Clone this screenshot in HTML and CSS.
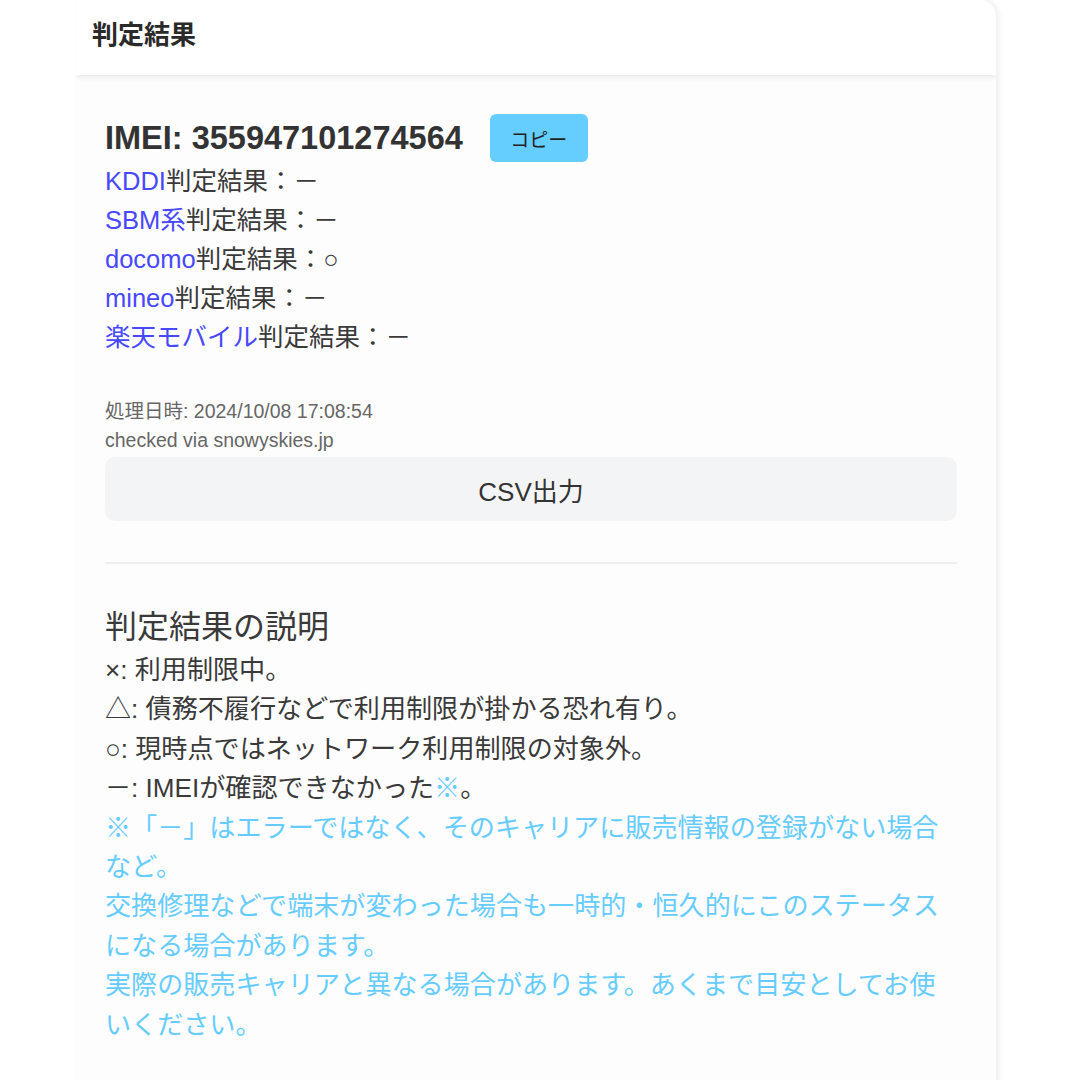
FILE: index.html
```html
<!DOCTYPE html>
<html lang="ja">
<head>
<meta charset="utf-8">
<title>判定結果</title>
<link rel="stylesheet" href="styles.css">
</head>
<body>
<div class="page">
  <section class="card">
    <header class="card-header">
      <h2 class="card-title">判定結果</h2>
    </header>
    <div class="card-body">
      <div class="imei-row">
        <h1 class="imei">IMEI: 355947101274564</h1>
        <button class="copy-btn" type="button">コピー</button>
      </div>
      <ul class="results">
        <li><a class="carrier" href="#">KDDI</a>判定結果：－</li>
        <li><a class="carrier" href="#">SBM系</a>判定結果：－</li>
        <li><a class="carrier" href="#">docomo</a>判定結果：○</li>
        <li><a class="carrier" href="#">mineo</a>判定結果：－</li>
        <li><a class="carrier" href="#">楽天モバイル</a>判定結果：－</li>
      </ul>
      <div class="meta">
        <div>処理日時: 2024/10/08 17:08:54</div>
        <div>checked via snowyskies.jp</div>
      </div>
      <button class="csv-btn" type="button">CSV出力</button>
      <hr class="divider">
      <h3 class="legend-title">判定結果の説明</h3>
      <div class="legend">
        <div>×: 利用制限中。</div>
        <div>△: 債務不履行などで利用制限が掛かる恐れ有り。</div>
        <div>○: 現時点ではネットワーク利用制限の対象外。</div>
        <div>－: IMEIが確認できなかった<span class="note-mark">※</span>。</div>
        <div class="note">※「－」はエラーではなく、そのキャリアに販売情報の登録がない場合など。</div>
        <div class="note">交換修理などで端末が変わった場合も一時的・恒久的にこのステータスになる場合があります。</div>
        <div class="note">実際の販売キャリアと異なる場合があります。あくまで目安としてお使いください。</div>
      </div>
    </div>
  </section>
</div>
</body>
</html>
```
FILE: styles.css
```css
* {
  box-sizing: border-box;
}

html, body {
  margin: 0;
  padding: 0;
  background: #ffffff;
}

body {
  font-family: "Liberation Sans", "Noto Sans CJK JP", sans-serif;
  color: #3a3a3a;
  overflow: hidden;
}

.page {
  padding-left: 76px;
  width: 1080px;
}

.card {
  width: 920px;
  min-height: 1100px;
  background: #fdfdfd;
  border-radius: 0 16px 0 0;
  box-shadow: 3px 0 6px rgba(0, 0, 0, 0.07);
  overflow: hidden;
}

.card-header {
  height: 75px;
  display: flex;
  align-items: center;
  padding: 0 16px 5px;
  background: #ffffff;
  box-shadow: 0 3px 5px rgba(0, 0, 0, 0.07);
  position: relative;
}

.card-title {
  margin: 0;
  font-size: 26px;
  font-weight: 700;
  color: #2a2a2a;
  line-height: 1;
}

.card-body {
  padding: 39px 39px 40px 29px;
}

.imei-row {
  display: flex;
  align-items: center;
  height: 48px;
}

.imei {
  margin: 0;
  font-size: 32.5px;
  font-weight: 700;
  color: #333333;
  line-height: 1;
}

.copy-btn {
  margin-left: 27px;
  width: 98px;
  height: 48px;
  border: none;
  border-radius: 6px;
  background: #66cdff;
  color: #222222;
  font-family: inherit;
  font-size: 19px;
  padding: 0;
}

.results {
  list-style: none;
  margin: 0;
  padding: 0;
  font-size: 25.5px;
  line-height: 39px;
}

.carrier {
  color: #4848ff;
  text-decoration: none;
}

.meta {
  margin-top: 40px;
  font-size: 19.5px;
  line-height: 29px;
  color: #666666;
}

.csv-btn {
  display: block;
  width: 100%;
  height: 64px;
  margin-top: 2px;
  border: none;
  border-radius: 10px;
  background: #f3f4f6;
  color: #333333;
  font-family: inherit;
  font-size: 26px;
  padding: 0;
}

.divider {
  margin: 41px 0 0;
  border: none;
  height: 2px;
  background: #efefef;
}

.legend-title {
  margin: 41px 0 0;
  font-size: 32px;
  font-weight: 400;
  line-height: 44px;
  color: #3a3a3a;
}

.legend {
  padding-top: 2px;
  font-size: 26.1px;
  line-height: 39.4px;
}

.note,
.note-mark {
  color: #66ccff;
}
```
